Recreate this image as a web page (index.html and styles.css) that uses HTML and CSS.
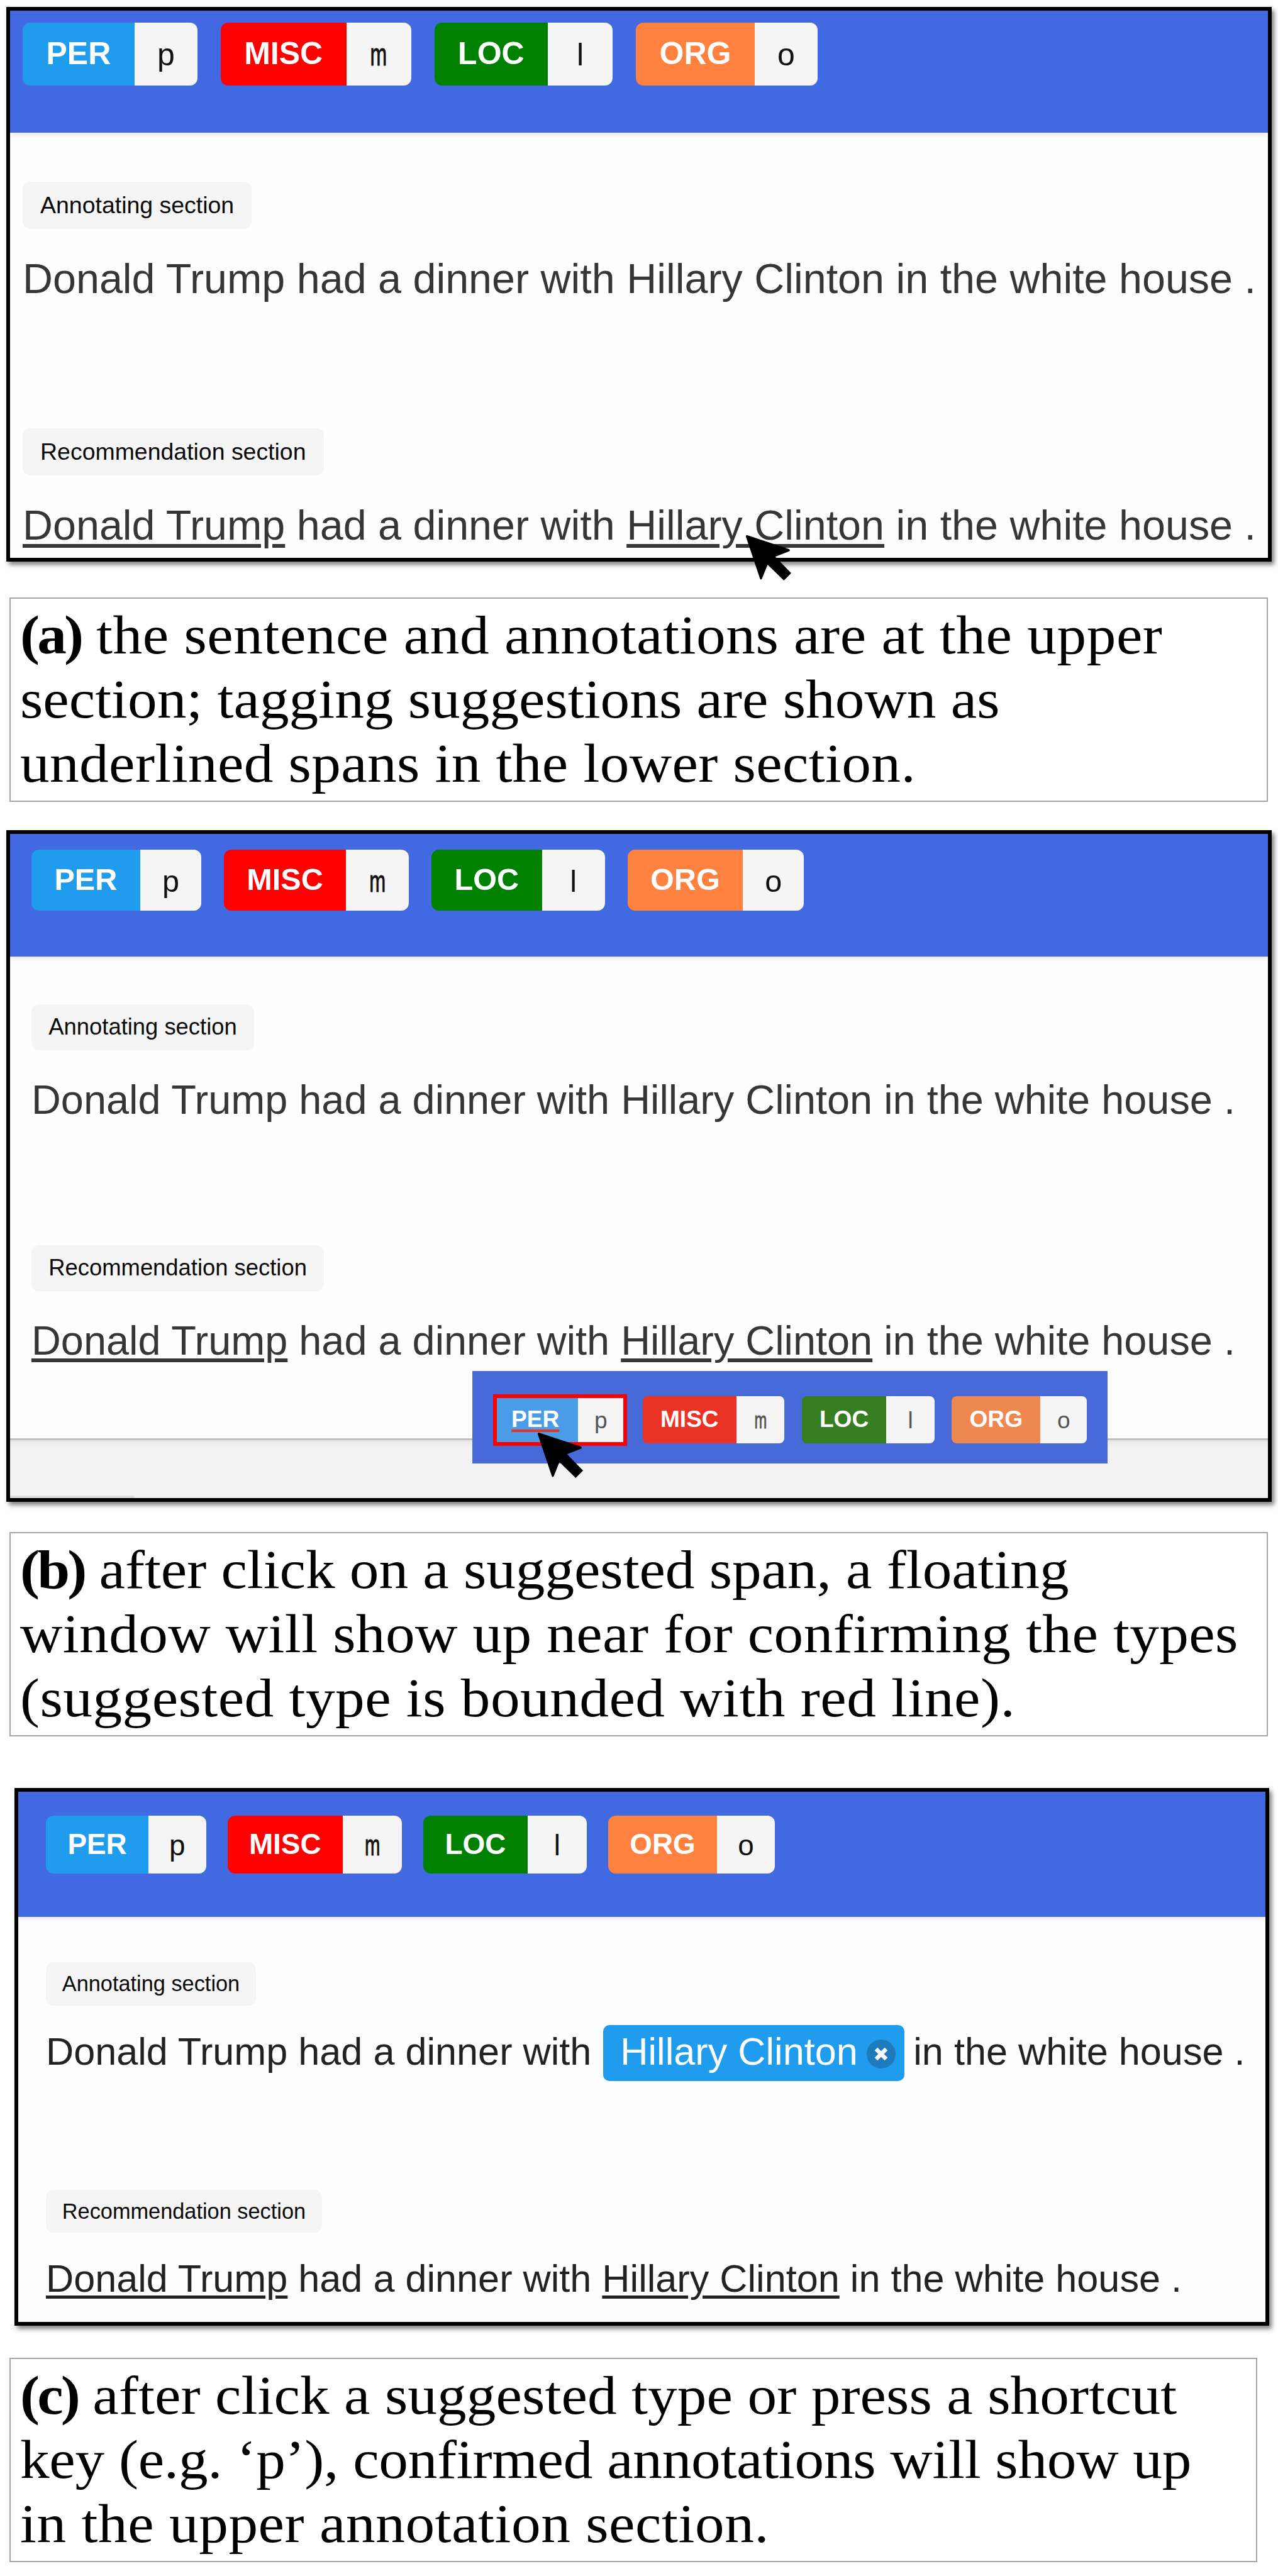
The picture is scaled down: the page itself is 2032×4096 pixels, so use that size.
FILE: index.html
```html
<!DOCTYPE html>
<html lang="en">
<head>
<meta charset="utf-8">
<title>Annotation tool walkthrough</title>
<link rel="stylesheet" href="styles.css">
</head>
<body>
<main class="page">
  <section class="panel panel-a">
    <header class="bar">
      <div class="tag per"><b>PER</b><span class="key">p</span></div>
      <div class="tag misc"><b>MISC</b><span class="key wide"><i class="narrow">m</i></span></div>
      <div class="tag loc"><b>LOC</b><span class="key wide">l</span></div>
      <div class="tag org"><b>ORG</b><span class="key">o</span></div>
    </header>
    <div class="body">
      <div class="label">Annotating section</div>
      <p class="sentence">Donald Trump had a dinner with Hillary Clinton in the white house .</p>
      <div class="label second">Recommendation section</div>
      <p class="sentence"><u>Donald Trump</u> had a dinner with <u>Hillary Clinton</u> in the white house .</p>
    </div>
    <svg class="cursor" viewBox="0 0 72 72"><path d="M3 1 L68.5 22.8 Q71.5 24.5 68.5 26.5 L47 34.7 L72 60.5 L60.5 72 L35 47 L26 69.5 Q24.6 71.5 23.2 69.5 L1 3.5 Q0.5 0.5 3 1 Z"/></svg>
  </section>
  <p class="caption caption-a"><span class="line"><b>(a)</b> the sentence and annotations are at the upper</span> <span class="line">section; tagging suggestions are shown as</span> <span class="line">underlined spans in the lower section.</span></p>

  <section class="panel panel-b">
    <header class="bar">
      <div class="tag per"><b>PER</b><span class="key">p</span></div>
      <div class="tag misc"><b>MISC</b><span class="key wide"><i class="narrow">m</i></span></div>
      <div class="tag loc"><b>LOC</b><span class="key wide">l</span></div>
      <div class="tag org"><b>ORG</b><span class="key">o</span></div>
    </header>
    <div class="body">
      <div class="label">Annotating section</div>
      <p class="sentence">Donald Trump had a dinner with Hillary Clinton in the white house .</p>
      <div class="label second">Recommendation section</div>
      <p class="sentence"><u>Donald Trump</u> had a dinner with <u>Hillary Clinton</u> in the white house .</p>
    </div>
    <footer class="foot"><span class="foot-edge"></span></footer>
    <div class="popup">
      <div class="tag per suggested"><b><span class="red-line">PER</span></b><span class="key">p</span></div>
      <div class="tag misc"><b>MISC</b><span class="key wide"><i class="narrow">m</i></span></div>
      <div class="tag loc"><b>LOC</b><span class="key wide">l</span></div>
      <div class="tag org"><b>ORG</b><span class="key">o</span></div>
    </div>
    <svg class="cursor" viewBox="0 0 72 72"><path d="M3 1 L68.5 22.8 Q71.5 24.5 68.5 26.5 L47 34.7 L72 60.5 L60.5 72 L35 47 L26 69.5 Q24.6 71.5 23.2 69.5 L1 3.5 Q0.5 0.5 3 1 Z"/></svg>
  </section>
  <p class="caption caption-b"><span class="line"><b>(b)</b> after click on a suggested span, a floating</span> <span class="line">window will show up near for confirming the types</span> <span class="line">(suggested type is bounded with red line).</span></p>

  <section class="panel panel-c">
    <header class="bar">
      <div class="tag per"><b>PER</b><span class="key">p</span></div>
      <div class="tag misc"><b>MISC</b><span class="key wide"><i class="narrow">m</i></span></div>
      <div class="tag loc"><b>LOC</b><span class="key wide">l</span></div>
      <div class="tag org"><b>ORG</b><span class="key">o</span></div>
    </header>
    <div class="body">
      <div class="label">Annotating section</div>
      <p class="sentence split"><span>Donald Trump had a dinner with</span><span class="chip">Hillary Clinton<svg class="close" viewBox="0 0 46 46"><circle cx="23" cy="23" r="23"/><path d="M15 15 L31 31 M31 15 L15 31"/></svg></span><span>in the white house .</span></p>
      <div class="label second">Recommendation section</div>
      <p class="sentence"><u>Donald Trump</u> had a dinner with <u>Hillary Clinton</u> in the white house .</p>
    </div>
  </section>
  <p class="caption caption-c"><span class="line"><b>(c)</b> after click a suggested type or press a shortcut</span> <span class="line">key (e.g. ‘p’), confirmed annotations will show up</span> <span class="line">in the upper annotation section.</span></p>
</main>
</body>
</html>
```
FILE: styles.css
```css
* { box-sizing: border-box; }
body { margin: 0; background: #fff; }
p { margin: 0; }

.page {
  width: 2032px;
  height: 4096px;
  padding-top: 11px;
  overflow: hidden;
  font-family: "Liberation Sans", Arial, sans-serif;
}

/* Annotation windows */
.panel {
  position: relative;
  display: flex;
  flex-direction: column;
  margin-left: 10px;
  width: 2012px;
  border: 6px solid #000;
  border-top-width: 6.5px;
  background: #fefefe;
  box-shadow: 4px 5px 7px rgba(0, 0, 0, .5);
}
.panel-a { --fs: 50px; --pad: 20px; --text: 66.45px; --below: 40px; --between: 197px; height: 882px; }
.panel-b { --fs: 48.6px; --pad: 34px; --text: 64.85px; --below: 39px; --between: 191.5px; height: 1068px; margin-top: 45px; }
.panel-c { --fs: 45.85px; --pad: 44px; --text: 61.2px; --below: 34px; --between: 179px; height: 855px; width: 1995px; margin: 82px 0 0 23px; }

.bar {
  display: flex;
  align-items: flex-start;
  flex: none;
  gap: .738em;
  height: 194px;
  padding: 19px 0 0 var(--pad);
  background: #4169e1;
  font-size: var(--fs);
  box-shadow: 0 4px 6px rgba(0, 0, 0, .07);
}
.panel-b .bar { height: 195px; padding-top: 25px; }
.panel-c .bar { height: 199px; padding-top: 38px; }

.tag {
  display: flex;
  height: 2em;
  line-height: 2em;
  border-radius: 12px;
  overflow: hidden;
  color: #fff;
}
.tag b { padding: 0 .75em; line-height: 1.97em; }
.key { width: 2em; background: #f5f5f5; color: #111; text-align: center; line-height: 2.07em; }
.wide { width: 2.06em; }
.narrow {
  display: inline-block;
  margin: 0 -.2em;
  font-style: normal;
  transform: scaleX(.64);
  -webkit-text-stroke: 1px currentColor;
}
.per { background: #209cee; }
.misc { background: #f00; }
.loc { background: #008000; }
.org { background: #ff8140; }

.body { padding: 78px 0 0 var(--pad); }
.panel-b .body { padding-top: 76px; }
.panel-c .body { padding-top: 72px; }
.label {
  width: max-content;
  height: 2em;
  padding: 0 .75em;
  border-radius: 12px;
  background: #f5f5f5;
  color: #0a0a0a;
  font-size: calc(var(--fs) * .749);
  line-height: 1.98em;
}
.second { margin-top: var(--between); }
.sentence {
  margin-top: var(--below);
  height: 80px;
  color: #363636;
  font-size: var(--text);
  line-height: 79px;
  white-space: nowrap;
}
.panel-c .sentence { color: #222; }
u { text-decoration-thickness: .088em; text-underline-offset: .1em; }

.split { display: flex; align-items: center; }
.chip {
  display: flex;
  align-items: center;
  flex: none;
  height: 89px;
  margin: 4px 14.5px 0 18.5px;
  padding: 0 14px 4px 27.5px;
  border-radius: 10px;
  background: #209cee;
  color: #fff;
}
.close { width: 46px; height: 46px; margin: 6px 0 0 14px; fill: #1b7bbd; }
.close path { stroke: #fff; stroke-width: 6.5; }

/* Footer strip and suggestion popup of the second window */
.foot {
  display: flex;
  align-items: flex-end;
  flex: 1;
  margin-top: 115px;
  border-top: 3px solid #c0c0c0;
  background: linear-gradient(#e6e6e6, #f2f2f2 9px);
}
.foot-edge { width: 198px; height: 4px; border-radius: 0 4px 0 0; background: #ddd; }
.popup {
  position: absolute;
  left: 735px;
  top: 854px;
  display: flex;
  align-items: center;
  gap: 27.5px;
  width: 1010px;
  height: 147px;
  padding: 8px 0 0 33px;
  background: #476ad8;
  font-size: 37.1px;
  font-kerning: none;
}
.popup .tag { border-radius: 8px; }
.popup .tag b { padding: 0 .76em; }
.popup .key { color: #555; }
.popup .per { background: #4a9be8; }
.popup .misc { background: #ea3323; }
.popup .loc { background: #377d22; }
.popup .org { background: #ef8850; }
.popup .suggested {
  height: 82px;
  margin-right: -3px;
  border: 6px solid #f00;
  border-radius: 0;
}
.popup .suggested b { padding: 0 30px 0 23px; line-height: 66px; }
.popup .suggested .key { width: 72px; line-height: 71px; }
.popup .red-line { text-decoration: underline #ea3323 4px; text-decoration-skip-ink: none; text-underline-offset: 4px; }

.cursor { position: absolute; width: 73px; height: 73px; }
.panel-a .cursor { left: 1169px; top: 833px; }
.panel-b .cursor { left: 838px; top: 951px; }

/* Captions */
.caption {
  width: 2001px;
  height: 325px;
  margin: 57px 0 0 15px;
  padding: 7px 0 0 15px;
  border: 2.5px solid #a5a5a5;
  color: #000;
  font-family: Palatino, "Liberation Serif", "Times New Roman", serif;
  font-size: 86px;
  line-height: 102px;
}
.caption-b { margin-top: 48px; }
.caption-c { width: 1984px; margin-top: 51px; }
.line {
  display: block;
  width: max-content;
  white-space: nowrap;
  transform: scaleX(1.085);
  transform-origin: left;
}
.caption .line b { letter-spacing: -3.6px; }
.caption-a .line:nth-child(1) { letter-spacing: .5px; }
.caption-a .line:nth-child(3) { letter-spacing: .35px; }
.caption-b .line:nth-child(1) { letter-spacing: -.05px; }
.caption-b .line:nth-child(2) { letter-spacing: .36px; }
.caption-b .line:nth-child(3) { letter-spacing: .43px; }
.caption-c .line:nth-child(1) { letter-spacing: .07px; }
.caption-c .line:nth-child(2) { letter-spacing: -.26px; }
.caption-c .line:nth-child(3) { letter-spacing: .5px; }
```
